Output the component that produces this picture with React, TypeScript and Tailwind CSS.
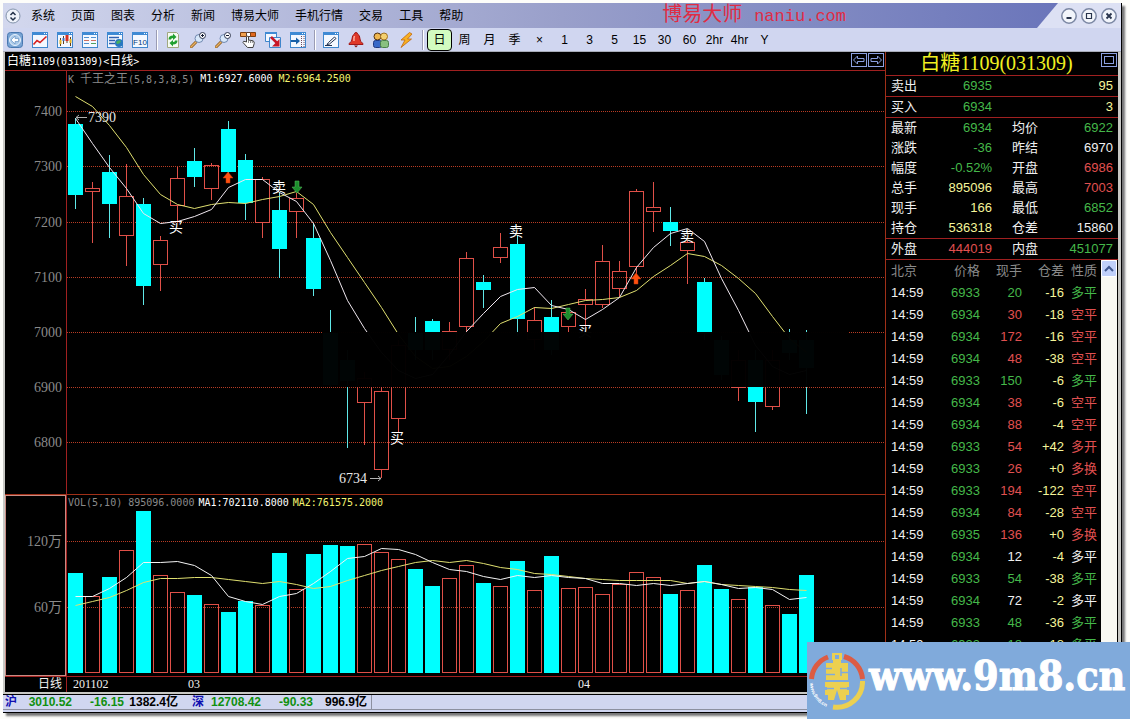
import clsx from "clsx";
import type { ReactNode } from "react";

type Bar = {
	up: boolean;
	top: number;
	bottom: number;
	high: number;
	low: number;
	volume: number;
};

type Tone = "green" | "red" | "yellow" | "white";

const MENU = [
	"系统",
	"页面",
	"图表",
	"分析",
	"新闻",
	"博易大师",
	"手机行情",
	"交易",
	"工具",
	"帮助",
];

const PERIODS = [
	"日",
	"周",
	"月",
	"季",
	"×",
	"1",
	"3",
	"5",
	"15",
	"30",
	"60",
	"2hr",
	"4hr",
	"Y",
];

const TONES: Record<Tone, string> = {
	green: "text-[#45b84a]",
	red: "text-[#e05050]",
	yellow: "text-[#f5f59a]",
	white: "text-[#f0f0f0]",
};

const FIRST_X = 68;
const STEP = 17;
const BODY = 15;
const VOLUME_BASE = 673;

// up, body top, body bottom, high, low, volume top
const BARS: Bar[] = (
	[
		[0, 124, 195, 118, 209, 573],
		[1, 188, 192, 182, 243, 596],
		[0, 172, 204, 155, 238, 577],
		[1, 196, 236, 164, 266, 550],
		[0, 204, 286, 198, 305, 511],
		[1, 240, 265, 236, 291, 575],
		[1, 178, 206, 167, 222, 592],
		[0, 161, 177, 148, 187, 595],
		[1, 165, 189, 163, 200, 604],
		[0, 129, 172, 121, 174, 612],
		[0, 160, 203, 154, 220, 601],
		[1, 179, 223, 177, 238, 605],
		[0, 210, 249, 192, 278, 553],
		[1, 198, 212, 193, 238, 589],
		[0, 238, 289, 223, 296, 554],
		[0, 333, 385, 310, 387, 545],
		[0, 360, 381, 350, 448, 546],
		[1, 378, 403, 372, 445, 544],
		[1, 391, 470, 385, 478, 552],
		[1, 345, 419, 340, 432, 559],
		[0, 333, 350, 317, 360, 569],
		[0, 321, 350, 319, 360, 586],
		[1, 331, 350, 322, 360, 578],
		[1, 258, 327, 252, 334, 565],
		[0, 282, 290, 275, 308, 583],
		[1, 247, 258, 233, 263, 586],
		[0, 244, 319, 235, 336, 561],
		[1, 320, 340, 307, 350, 590],
		[0, 317, 350, 300, 355, 556],
		[1, 312, 327, 308, 332, 588],
		[1, 299, 305, 289, 327, 587],
		[1, 261, 305, 245, 308, 594],
		[1, 271, 289, 261, 297, 584],
		[1, 191, 267, 189, 275, 572],
		[1, 207, 212, 182, 232, 577],
		[0, 222, 231, 207, 246, 594],
		[1, 242, 251, 240, 284, 590],
		[0, 282, 334, 278, 340, 565],
		[0, 340, 375, 336, 380, 589],
		[1, 360, 388, 350, 401, 599],
		[0, 360, 402, 350, 432, 587],
		[1, 360, 407, 350, 410, 605],
		[0, 340, 353, 329, 360, 614],
		[0, 340, 368, 330, 414, 575],
	] as const
).map(([up, top, bottom, high, low, volume]) => ({
	up: up === 1,
	top,
	bottom,
	high,
	low,
	volume,
}));

const M1 = [
	118, 143, 167, 188, 213, 223, 221, 216, 209, 187, 179, 179, 192, 201, 223,
	260, 300, 328, 352, 370, 378, 374, 354, 331, 313, 296, 289, 287, 305, 309,
	319, 309, 297, 267, 247, 233, 228, 241, 278, 310, 345, 366, 374, 370,
];

const M2 = [
	96, 106, 125, 147, 174, 194, 204, 208, 204, 202, 203, 199, 196, 191, 204,
	232, 257, 282, 307, 334, 356, 368, 366, 356, 341, 323, 316, 307, 308, 304,
	300, 299, 297, 290, 276, 265, 253, 256, 265, 278, 293, 316, 338, 352,
];

const MA1 = [
	596, 596, 588, 577, 562, 562, 561, 565, 575, 596, 601, 604, 596, 593, 583,
	571, 558, 556, 548, 549, 554, 562, 569, 571, 576, 579, 575, 577, 575, 577,
	578, 583, 583, 585, 583, 585, 583, 581, 584, 588, 587, 589, 599, 597,
];

const MA2 = [
	605, 601, 597, 590, 582, 578, 578, 577, 577, 579, 581, 583, 581, 584, 588,
	586, 580, 575, 570, 566, 562, 560, 562, 560, 563, 567, 569, 573, 574, 576,
	578, 579, 580, 580, 580, 580, 583, 581, 584, 585, 586, 587, 589, 590,
];

const PRICE_GRID = [
	[7400, 111],
	[7300, 166],
	[7200, 222],
	[7100, 277],
	[7000, 332],
	[6900, 387],
	[6800, 442],
];

const SIGNALS: [string, number, number][] = [
	["买", 176, 227],
	["卖", 279, 187],
	["买", 397, 438],
	["卖", 516, 231],
	["买", 585, 331],
	["卖", 687, 236],
];

const QUOTES: [string, string, Tone, string, string, Tone][] = [
	["最新", "6934", "green", "均价", "6922", "green"],
	["涨跌", "-36", "green", "昨结", "6970", "white"],
	["幅度", "-0.52%", "green", "开盘", "6986", "red"],
	["总手", "895096", "yellow", "最高", "7003", "red"],
	["现手", "166", "yellow", "最低", "6852", "green"],
	["持仓", "536318", "yellow", "仓差", "15860", "white"],
];

const TRADES: [string, string, string, string, Tone][] = [
	["6933", "20", "-16", "多平", "green"],
	["6934", "30", "-18", "空平", "red"],
	["6934", "172", "-16", "空平", "red"],
	["6934", "48", "-38", "空平", "red"],
	["6933", "150", "-6", "多平", "green"],
	["6934", "38", "-6", "空平", "red"],
	["6934", "88", "-4", "空平", "red"],
	["6933", "54", "+42", "多开", "red"],
	["6933", "26", "+0", "多换", "red"],
	["6933", "194", "-122", "空平", "red"],
	["6934", "84", "-28", "空平", "red"],
	["6935", "136", "+0", "多换", "red"],
	["6934", "12", "-4", "多平", "white"],
	["6933", "54", "-38", "多平", "green"],
	["6934", "72", "-2", "多平", "white"],
	["6933", "48", "-36", "多平", "green"],
	["6933", "18", "-18", "多平", "green"],
];

const toPoints = (values: number[]) =>
	values.map((y, i) => `${FIRST_X + 7.5 + i * STEP},${y + 0.5}`).join(" ");

const Frame = ({ children }: { children?: ReactNode }) => (
	<>
		<rect x="0.5" y="0.5" width="15" height="15" fill="#f4f8ff" stroke="#3f86cc" />
		<path d="M0 0H16V3H0Z" fill="#3f8ad4" />
		<path d="M12 1h1v1h-1zM14 1h1v1h-1z" fill="#fff" />
		{children}
	</>
);

const Magnifier = ({ plus }: { plus?: boolean }) => (
	<>
		<path d="M1 15L6 10" stroke="#8a5a20" strokeWidth="3" strokeLinecap="round" />
		<path d="M1 15L6 10" stroke="#e8b060" strokeWidth="1.5" strokeLinecap="round" />
		<circle cx="9" cy="6.5" r="4" fill="#d8e8fa" stroke="#7088b0" />
		<circle cx="12.5" cy="3.5" r="3" fill="#fff" stroke="#303850" />
		<path d="M11 3.5h3" stroke="#101830" />
		{plus && <path d="M12.5 2v3" stroke="#101830" />}
	</>
);

const TOOLS: { label: string; icon: ReactNode }[][] = [
	[
		{
			label: "返回",
			icon: (
				<>
					<rect x="0.5" y="0.5" width="15" height="15" rx="3" fill="#78a4d4" stroke="#4878b0" />
					<circle cx="8" cy="8" r="5.5" fill="#a8c8e8" stroke="#e8f2fc" />
					<path d="M4 8l4-4v2.5h3.5v3H8V12z" fill="#fff" stroke="#5888bc" strokeWidth="0.6" />
				</>
			),
		},
		{
			label: "分时图",
			icon: (
				<Frame>
					<path d="M1.5 12.5L5 8.5l3 2L14.5 4.5" fill="none" stroke="#d82020" strokeWidth="1.6" />
				</Frame>
			),
		},
		{
			label: "K线图",
			icon: (
				<Frame>
					<path d="M3.5 6v8M6.5 4v8M10 3v8M13.5 5v9" stroke="#604020" />
					<path d="M2.5 8h2v4h-2zM12.5 7h2v4h-2z" fill="#e0b020" />
					<path d="M5.5 6h2v3h-2z" fill="#3a70c0" />
					<path d="M8.5 3h3v6h-3z" fill="#d83020" />
				</Frame>
			),
		},
		{
			label: "报价表",
			icon: (
				<Frame>
					<path d="M2 5.5h5M2 11.5h5M9 5.5h5" stroke="#5090d0" />
					<path d="M2 8.5h5M9 8.5h5" stroke="#d07060" />
					<path d="M9 11.5h5" stroke="#50a060" />
				</Frame>
			),
		},
		{
			label: "资讯",
			icon: (
				<Frame>
					<path d="M2 5.5h10M2 8.5h6M2 11.5h6" stroke="#3060b0" strokeWidth="1.5" />
					<circle cx="12" cy="11" r="4" fill="#2878c0" />
					<path d="M9 10q3-3 5-1q-1 3-4 3z" fill="#48b060" />
				</Frame>
			),
		},
		{
			label: "F10资料",
			icon: (
				<Frame>
					<text x="8" y="13" textAnchor="middle" fontSize="8" fill="#083878">
						F10
					</text>
				</Frame>
			),
		},
	],
	[
		{
			label: "刷新",
			icon: (
				<>
					<path d="M2.5 0.5h9l2 2v13h-11z" fill="#f6fbf2" stroke="#a0a880" />
					<path d="M3.5 7.5q0-4 4.5-4V1.5l3.5 3.5L8 8V6Q6 6 6 7.5z" fill="#20a030" />
					<path d="M12.5 8.5q0 4-4.5 4v2L4.5 11L8 8v2Q10 10 10 8.500z" fill="#20a030" />
				</>
			),
		},
		{ label: "放大", icon: <Magnifier plus /> },
		{ label: "缩小", icon: <Magnifier /> },
		{
			label: "拖动",
			icon: (
				<>
					<path d="M0.5 0.5h6v4h-6z" fill="#f0a050" stroke="#804010" />
					<path d="M6.5 0.5h4v4h-4z" fill="#fff" stroke="#604030" />
					<path d="M10.5 0.5h5v4h-5z" fill="#e06820" stroke="#804010" />
					<path
						d="M6.5 10V5q1-1.500 2 0v3l4.500 .8q1.500 .5 1.200 2.700L13 15.500H7.500L3 10.500q0-1.800 2-1z"
						fill="#fff"
						stroke="#404040"
					/>
					<path d="M8.500 8v3M10.500 8.500v2.500M12.300 9v2" stroke="#707070" strokeWidth="0.800" />
				</>
			),
		},
		{
			label: "切换窗口",
			icon: (
				<>
					<path d="M0.5 0.5h11v9h-11z" fill="#f4f8ff" stroke="#3f86cc" />
					<path d="M0 0h12v2H0z" fill="#3f8ad4" />
					<path d="M4.5 5.5h11v10h-11z" fill="#e4f0ff" stroke="#3f86cc" />
					<path d="M6 5l6 6" stroke="#c81828" strokeWidth="2.500" />
					<path d="M14.500 7v7.500H7z" fill="#c81828" />
				</>
			),
		},
		{
			label: "右移",
			icon: (
				<Frame>
					<path d="M1 9h6" stroke="#1860a8" strokeWidth="2" />
					<path d="M6 5.500L10 9l-4 3.500z" fill="#1860a8" />
					<path d="M11.500 4v11M14 4v11" stroke="#704858" strokeDasharray="1 1" />
				</Frame>
			),
		},
	],
	[
		{
			label: "画线",
			icon: (
				<Frame>
					<path d="M4 12.500l2.500-.5l6.500-5.500l-1.500-1.500l-6 5.500z" fill="#fff" stroke="#203050" />
					<path d="M2 13.500h7" stroke="#203050" />
				</Frame>
			),
		},
		{
			label: "预警",
			icon: (
				<>
					<path
						d="M8 .5q1.500 0 1.500 1.500Q12 3 12 7q0 3 3 4.500v1H1v-1Q4 10 4 7q0-4 2.500-5Q6.500 .5 8 .5z"
						fill="#e03828"
						stroke="#a01818"
					/>
					<path d="M6.500 4Q5.500 6 6 9" fill="none" stroke="#ffb0a0" strokeWidth="1.500" />
					<path d="M6 13.500h4L8 15.500z" fill="#801010" />
				</>
			),
		},
		{
			label: "好友",
			icon: (
				<>
					<circle cx="4.500" cy="4.500" r="3.500" fill="#f0b850" stroke="#503010" />
					<rect x="0.500" y="8.500" width="8" height="7" rx="2" fill="#3868c8" stroke="#203880" />
					<circle cx="11" cy="4.500" r="3.500" fill="#f4d070" stroke="#a07020" />
					<rect x="7.500" y="8.500" width="8" height="7" rx="2" fill="#88c080" stroke="#488048" />
				</>
			),
		},
		{
			label: "闪电下单",
			icon: (
				<path
					d="M11.500 .5L3 8h4l-4 7.500L13.500 7H9.500L14 2z"
					fill="#f8b020"
					stroke="#c06810"
					strokeWidth="0.800"
				/>
			),
		},
	],
];

const Separator = () => (
	<div className="flex h-5 w-2 justify-center">
		<div className="w-px bg-[#9a9cb4]" />
		<div className="w-px bg-white" />
	</div>
);

const TitleBar = () => (
	<header className="flex h-[25px] items-center bg-linear-to-r from-[#d3d8ee] via-[#999fca] to-[#6570b8]">
		<button aria-label="主菜单" className="ml-[2px] h-4 w-4 shrink-0">
			<svg viewBox="0 0 16 16" className="block h-4 w-4">
				<circle cx="8" cy="8" r="7" fill="#eef2fa" stroke="#8494ac" />
				<path
					d="M5.500 7L8 4.500L10.500 7M5.500 9.500L8 12l2.500-2.500"
					fill="none"
					stroke="#203048"
					strokeWidth="1.500"
				/>
			</svg>
		</button>
		<nav className="ml-[10px] flex shrink-0 gap-4">
			{MENU.map((item) => (
				<button key={item} className="text-xs text-black">
					{item}
				</button>
			))}
		</nav>
		<h1 className="ml-auto flex shrink-0 items-baseline gap-3 pr-[191px] text-xl leading-6 text-[#e02c44]">
			<span className="font-['Liberation_Serif','Noto_Sans_CJK_SC',serif]">
				博易大师
			</span>
			<span className="font-['Liberation_Mono',monospace] text-[17px]">
				naniu.com
			</span>
		</h1>
		<div className="flex h-full w-[84px] shrink-0 items-center justify-end gap-1 bg-[#dde1f4] pr-1 [clip-path:polygon(25%_0,100%_0,100%_100%,0_100%)]">
			{["最小化", "最大化", "关闭"].map((label, index) => (
				<button key={label} aria-label={label} className="h-4 w-4">
					<svg viewBox="0 0 16 16" className="block h-4 w-4">
						<circle cx="8" cy="8" r="7.200" fill="#f2f5fb" stroke="#7c88a4" strokeWidth="1.500" />
						<path
							d={
								[
									"M5.500 10h5",
									"M5.500 5.500h5v5h-5z",
									"M5.500 5.500l5 5M10.500 5.500l-5 5",
								][index]
							}
							fill="none"
							stroke="#28344c"
							strokeWidth={index === 1 ? 1.2 : 1.8}
						/>
					</svg>
				</button>
			))}
		</div>
	</header>
);

const Toolbar = () => (
	<div className="flex h-6 items-center border-b border-[#a8acb8] bg-[#d0d6f0]">
		{TOOLS.map((group) => (
			<div key={group[0].label} className="flex items-center">
				{group.map(({ label, icon }) => (
					<button
						key={label}
						aria-label={label}
						className="flex h-6 w-[25px] items-center pl-1"
					>
						<svg viewBox="0 0 16 16" className="block h-4 w-4">
							{icon}
						</svg>
					</button>
				))}
				<Separator />
			</div>
		))}
		{PERIODS.map((period, index) => (
			<button
				key={period}
				className={clsx(
					"h-[22px] w-[25px] rounded text-center text-xs leading-5 text-black",
					index === 0 && "border border-black bg-[#d2fcc0]"
				)}
			>
				{period}
			</button>
		))}
	</div>
);

const Grid = ({ y, label }: { y: number; label: string }) => (
	<>
		<path
			d={`M67 ${y + 0.5}H884`}
			stroke="#b83c24"
			strokeDasharray="1 1"
			shapeRendering="crispEdges"
		/>
		<text x="62" y={y + 5} textAnchor="end" fontSize="14" fill="#8a8a8a">
			{label}
		</text>
	</>
);

const Arrow = ({ x, y, down }: { x: number; y: number; down?: boolean }) => (
	<path
		d={
			down
				? `M${x - 2} ${y - 6}h4v6h3l-5 6l-5-6h3z`
				: `M${x - 2} ${y + 5}h4v-5h3l-5-6l-5 6h3z`
		}
		fill={down ? "#1c8c2c" : "#ff5010"}
		stroke={down ? "#58c060" : "#c03808"}
		strokeWidth="0.500"
	/>
);

const PriceChart = () => (
	<section className="relative border-b border-[#a03018]">
		<p className="absolute top-0 left-[63px] flex h-4 items-center gap-[6px] font-['DejaVu_Sans_Mono','Noto_Sans_CJK_SC',monospace] text-[10px] leading-4 whitespace-pre">
			<span className="text-[#8a8a8a]">
				K <span className="text-xs leading-4">千王之王</span>(5,8,3,8,5)
			</span>
			<span className="text-white">M1:6927.6000</span>
			<span className="text-[#f4f470]">M2:6964.2500</span>
		</p>
		<svg
			viewBox="5 71 880 423"
			className="block h-auto w-full font-['Liberation_Serif','Noto_Sans_CJK_SC',serif]"
		>
			<path d="M66.5 71V494" stroke="#a02020" />
			{PRICE_GRID.map(([price, y]) => (
				<Grid key={price} y={y} label={String(price)} />
			))}
			{BARS.map(({ up, top, bottom, high, low }, i) => {
				const x = FIRST_X + i * STEP;
				return (
					<g key={x} shapeRendering="crispEdges">
						<path
							d={`M${x + 7.5} ${high}V${top}M${x + 7.5} ${bottom}V${low}`}
							stroke={up ? "#e05048" : "#60e8e8"}
						/>
						<rect
							x={up ? x + 0.5 : x}
							y={up ? top + 0.5 : top}
							width={up ? BODY - 1 : BODY}
							height={up ? bottom - top - 1 : bottom - top}
							fill={up ? "none" : "#00ffff"}
							stroke={up ? "#e05048" : "none"}
						/>
					</g>
				);
			})}
			<polyline points={toPoints(M2)} fill="none" stroke="#e0e070" />
			<polyline points={toPoints(M1)} fill="none" stroke="#f0e8f0" />
			{SIGNALS.map(([text, x, y]) => (
				<text key={x} x={x} y={y + 5} textAnchor="middle" fontSize="14" fill="#fff">
					{text}
				</text>
			))}
			<Arrow x={228} y={178} />
			<Arrow x={636} y={279} />
			<Arrow x={297} y={187} down />
			<Arrow x={568} y={314} down />
			<path d="M87 117.5H76M79 115l-3 2.5l3 2.5" fill="none" stroke="#b0b0b0" />
			<text x="88" y="122" fontSize="14" fill="#e8e8e8">
				7390
			</text>
			<path d="M370 478.5h11M378 476l3 2.5l-3 2.5" fill="none" stroke="#b0b0b0" />
			<text x="339" y="483" fontSize="14" fill="#e8e8e8">
				6734
			</text>
			<rect x="323" y="332" width="525" height="55" fillOpacity="0.98" />
		</svg>
	</section>
);

const VolumeChart = () => (
	<section className="relative">
		<p className="absolute top-0 left-[63px] flex h-4 gap-1 font-['DejaVu_Sans_Mono',monospace] text-[10px] leading-4">
			<span className="text-[#8a8a8a]">VOL(5,10) 895096.0000</span>
			<span className="text-white">MA1:702110.8000</span>
			<span className="text-[#f4f470]">MA2:761575.2000</span>
		</p>
		<svg
			viewBox="5 495 880 197"
			className="block h-auto w-full font-['Liberation_Serif','Noto_Sans_CJK_SC',serif]"
		>
			<path d="M66.5 495V692M5 676.5H885" stroke="#a02020" />
			<rect x="5.5" y="495.5" width="60" height="180" fill="none" stroke="#c88c84" />
			<Grid y={541} label="120万" />
			<Grid y={607} label="60万" />
			{BARS.map(({ up, volume }, i) => {
				const x = FIRST_X + i * STEP;
				return (
					<rect
						key={x}
						x={up ? x + 0.5 : x}
						y={up ? volume + 0.5 : volume}
						width={up ? BODY - 1 : BODY}
						height={up ? VOLUME_BASE - volume - 1 : VOLUME_BASE - volume}
						fill={up ? "none" : "#00ffff"}
						stroke={up ? "#e05048" : "none"}
						shapeRendering="crispEdges"
					/>
				);
			})}
			<polyline points={toPoints(MA2)} fill="none" stroke="#e0e070" />
			<polyline points={toPoints(MA1)} fill="none" stroke="#f4f4f4" />
			<g fontSize="12" fill="#f0f0f0">
				<text x="62" y="688" textAnchor="end">
					日线
				</text>
				<text x="73" y="688">
					201102
				</text>
				<text x="188" y="688">
					03
				</text>
				<text x="578" y="688">
					04
				</text>
			</g>
		</svg>
	</section>
);

const QuoteRow = ({ quote }: { quote: (typeof QUOTES)[number] }) => {
	const [name, value, tone, nextName, nextValue, nextTone] = quote;

	return (
		<dl className="flex h-5 px-[5px]">
			<dt className="w-10">{name}</dt>
			<dd className={clsx("w-[61px] text-right", TONES[tone])}>{value}</dd>
			{nextName && <dt className="ml-5">{nextName}</dt>}
			<dd className={clsx("flex-1 text-right", TONES[nextTone])}>{nextValue}</dd>
		</dl>
	);
};

const QuotePanel = () => (
	<aside className="flex w-[233px] shrink-0 flex-col border-l border-[#a03018] text-[13px] leading-5 text-[#f0f0f0]">
		<div className="flex h-6 items-start border-b border-[#a02020]">
			<h2 className="flex-1 pl-[6px] text-center font-['Liberation_Serif','Noto_Sans_CJK_SC',serif] text-xl leading-[23px] text-[#f0f020]">
				白糖1109(031309)
			</h2>
			<button
				aria-label="展开"
				className="mt-px mr-px flex h-[14px] w-4 items-center justify-center border border-[#8ca0e0]"
			>
				<span className="h-2 w-[10px] border border-[#8ca0e0]" />
			</button>
		</div>
		<div className="border-b border-[#a02020]">
			<QuoteRow quote={["卖出", "6935", "green", "", "95", "yellow"]} />
		</div>
		<div className="border-b border-[#a02020]">
			<QuoteRow quote={["买入", "6934", "green", "", "3", "yellow"]} />
		</div>
		<div className="border-b border-[#a02020]">
			{QUOTES.map((quote) => (
				<QuoteRow key={quote[0]} quote={quote} />
			))}
		</div>
		<div className="border-b border-[#a02020]">
			<QuoteRow quote={["外盘", "444019", "red", "内盘", "451077", "green"]} />
		</div>
		<div className="flex flex-1">
			<div className="flex-1">
				<table className="w-full table-fixed text-right leading-[22px]">
					<colgroup>
						<col className="w-[46px]" />
						<col className="w-12" />
						<col className="w-[42px]" />
						<col className="w-[42px]" />
						<col />
					</colgroup>
					<thead className="text-[#8a8a8a]">
						<tr className="h-[22px]">
							<th className="pl-[5px] text-left font-normal">北京</th>
							<th className="font-normal">价格</th>
							<th className="font-normal">现手</th>
							<th className="font-normal">仓差</th>
							<th className="pr-1 font-normal">性质</th>
						</tr>
					</thead>
					<tbody>
						{TRADES.map(([price, amount, diff, kind, tone], index) => (
							<tr key={index} className="h-[22px]">
								<td className="pl-[5px] text-left">14:59</td>
								<td className={TONES.green}>{price}</td>
								<td className={TONES[tone]}>{amount}</td>
								<td className={TONES.yellow}>{diff}</td>
								<td className={clsx("pr-1", TONES[tone])}>{kind}</td>
							</tr>
						))}
					</tbody>
				</table>
			</div>
			<div className="mr-px w-4 bg-[#f8f8f2]">
				<button
					aria-label="向上滚动"
					className="flex h-[17px] w-4 items-center justify-center rounded-xs border border-white bg-[#c0d0fa]"
				>
					<svg viewBox="0 0 10 8" className="h-2 w-[10px]">
						<path d="M1 6l4-4l4 4" fill="none" stroke="#405890" strokeWidth="2" />
					</svg>
				</button>
			</div>
		</div>
	</aside>
);

const StatusBar = () => (
	<footer className="flex h-[18px] border-t border-black bg-[#d0d6f0] text-xs leading-[14px] font-bold text-black">
		<div className="flex h-[15px] flex-1 border-b border-[#8c90a0]">
			<dl className="flex w-[369px] border-r border-[#8c90a0] pl-[2px] text-right">
				<dt className="text-[#1010b0]">沪</dt>
				<dd className="w-[55px] text-[#109010]">3010.52</dd>
				<dd className="w-[52px] text-[#109010]">-16.15</dd>
				<dd className="w-[54px]">1382.4亿</dd>
				<dt className="ml-[14px] text-[#1010b0]">深</dt>
				<dd className="w-[57px] text-[#109010]">12708.42</dd>
				<dd className="w-[52px] text-[#109010]">-90.33</dd>
				<dd className="w-[54px]">996.9亿</dd>
			</dl>
		</div>
	</footer>
);

const SiteBadge = () => (
	<a
		href="#"
		className="absolute right-0 bottom-0 flex h-[77px] w-[323px] items-center gap-1 bg-[#80aadb] pl-[2px] whitespace-nowrap text-white"
	>
		<svg viewBox="0 0 56 58" className="h-[58px] w-14 shrink-0">
			<path id="ring" d="M1 31A27 27 0 0 0 26 57" fill="none" />
			<path
				d="M2.500 27A25.500 25.500 0 0 1 19 5M35 4.500A25.500 25.500 0 0 1 53.500 27"
				fill="none"
				stroke="#dc5c44"
				strokeWidth="5"
			/>
			<path
				d="M53.500 29A25.500 25.500 0 0 1 24 55"
				fill="none"
				stroke="#ecd050"
				strokeWidth="5"
			/>
			<path
				d="M23 1h10v7h-1v3h7v17H17V11h7V8h-1zM26 3v4h4V3zM16 30h24v5h-2v3h2v5h-3v5h-6l-3-10l-3 10h-6v-5h-3v-5h2v-3h-2z"
				fill="#ecd050"
				fillRule="evenodd"
			/>
			<path
				d="M17 16.500h6M17 22.500h9M32 16v8M32 20.500h7M17 36.500h8M31 36.500h8"
				fill="none"
				stroke="#80aadb"
				strokeWidth="1.500"
			/>
			<text fontSize="5" fontWeight="bold" fill="#fff">
				<textPath href="#ring">www.9m8.cn</textPath>
			</text>
		</svg>
		<span className="pb-2 font-['DejaVu_Serif_Condensed','DejaVu_Serif',serif] text-[41px] leading-none font-bold [-webkit-text-stroke:1px_white]">
			www.9m8.cn
		</span>
	</a>
);

export default function App() {
	return (
		<div className="relative min-h-screen overflow-hidden bg-[#fdfdfa] pt-[3px] pr-2 pl-[3px] font-['Liberation_Sans','Noto_Sans_CJK_SC',sans-serif]">
			<div className="border-r border-b border-black shadow-[3px_3px_2px_#777]">
				<TitleBar />
				<Toolbar />
				<main className="flex border-r-[3px] border-b-2 border-l-2 border-[#c8c8c4] bg-black">
					<div className="min-w-0 flex-1">
						<div className="flex h-[19px] items-start border-b border-[#a02020] text-white">
							<h2 className="flex-1 pl-[2px] font-['DejaVu_Sans_Mono','Noto_Sans_CJK_SC',monospace] text-[10px] leading-[18px]">
								<span className="text-xs leading-[18px]">白糖</span>1109(031309)&lt;
								<span className="text-xs leading-[18px]">日线</span>&gt;
							</h2>
							<div className="flex gap-px pt-px pr-px">
								{["上一个", "下一个"].map((label, index) => (
									<button key={label} aria-label={label} className="h-[14px] w-4">
										<svg
											viewBox="0 0 16 14"
											className="block h-[14px] w-4"
											fill="none"
											stroke="#8ca0e0"
										>
											<rect x="0.5" y="0.5" width="15" height="13" />
											<path
												d={
													index === 0
														? "M2.500 7l4-4v2.500h6.500v3H6.500V11z"
														: "M13.500 7l-4-4v2.500H3v3h6.500V11z"
												}
											/>
										</svg>
									</button>
								))}
							</div>
						</div>
						<PriceChart />
						<VolumeChart />
					</div>
					<QuotePanel />
				</main>
				<StatusBar />
			</div>
			<SiteBadge />
		</div>
	);
}
